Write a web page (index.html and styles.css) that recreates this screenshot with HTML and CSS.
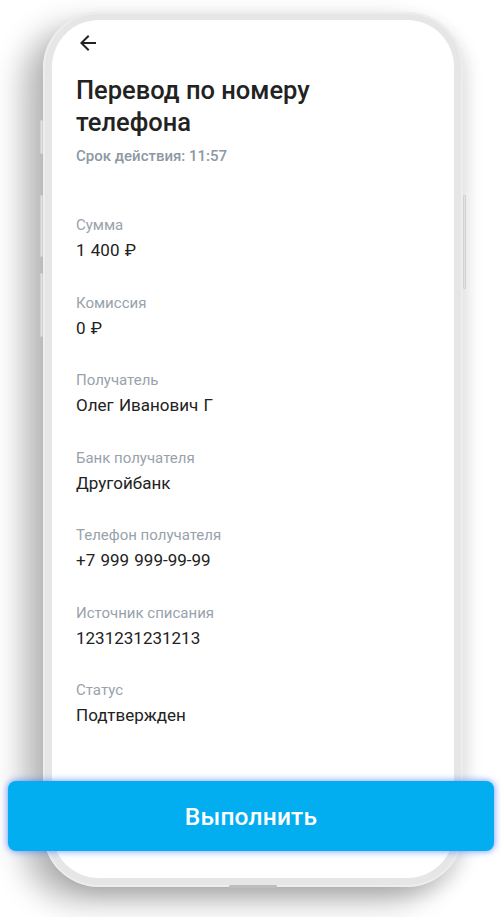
FILE: index.html
```html
<!DOCTYPE html>
<html lang="ru">
<head>
  <meta charset="UTF-8">
  <title>Перевод по номеру телефона</title>
  <link rel="stylesheet" href="styles.css">
</head>
<body>

  <div class="stage">
    <div class="phone">
      <span class="side-btn left b1"></span>
      <span class="side-btn left b2"></span>
      <span class="side-btn left b3"></span>
      <span class="side-btn right b4"></span>

      <div class="screen">
        <button class="back" aria-label="Назад">
          <svg width="24" height="24" viewBox="0 0 24 24">
            <path d="M20 11H7.83l5.59-5.59L12 4l-8 8 8 8 1.41-1.41L7.83 13H20v-2z" fill="#222"/>
          </svg>
        </button>

        <h1 class="title">Перевод по номеру телефона</h1>
        <p class="expires">Срок действия: 11:57</p>

        <div class="details">
          <div class="row">
            <span class="label">Сумма</span>
            <span class="value">1 400 ₽</span>
          </div>
          <div class="row">
            <span class="label">Комиссия</span>
            <span class="value">0 ₽</span>
          </div>
          <div class="row">
            <span class="label">Получатель</span>
            <span class="value">Олег Иванович Г</span>
          </div>
          <div class="row">
            <span class="label">Банк получателя</span>
            <span class="value">Другойбанк</span>
          </div>
          <div class="row">
            <span class="label">Телефон получателя</span>
            <span class="value">+7 999 999-99-99</span>
          </div>
          <div class="row">
            <span class="label">Источник списания</span>
            <span class="value">1231231231213</span>
          </div>
          <div class="row">
            <span class="label">Статус</span>
            <span class="value">Подтвержден</span>
          </div>
        </div>
      </div>

      <span class="home"></span>
    </div>

    <button class="submit">Выполнить</button>
  </div>

</body>
</html>
```

FILE: styles.css
```css
* {
  box-sizing: border-box;
}

body {
  margin: 0;
  width: 502px;
  height: 917px;
  overflow: hidden;
  background: #fff;
  font-family: Roboto, "Noto Sans", Arial, sans-serif;
  color: #222;
}

.stage {
  position: relative;
  height: 917px;
  padding: 12px 0 0 43px;
}

.phone {
  position: relative;
  width: 420px;
  height: 875px;
  padding: 8px 9px 9px 9px;
  border-radius: 56px;
  background: #e6e6e6;
  box-shadow:
    inset 0 0 0 2px #ededed,
    -20px 14px 30px rgba(0, 0, 0, 0.28),
    6px 8px 16px rgba(0, 0, 0, 0.1);
}

.side-btn {
  position: absolute;
  width: 3px;
  background: #e2e2e2;
  border: 1px solid #d2d2d2;
  border-radius: 1px;
}

.side-btn.left {
  left: -3px;
}

.side-btn.right {
  right: -3px;
}

.b1 { top: 108px; height: 34px; }
.b2 { top: 183px; height: 62px; }
.b3 { top: 261px; height: 64px; }
.b4 { top: 183px; height: 94px; }

.screen {
  height: 100%;
  padding: 11px 24px 0;
  border-radius: 47px;
  background: #fff;
  overflow: hidden;
}

.back {
  display: block;
  width: 24px;
  height: 24px;
  padding: 0;
  border: none;
  background: none;
}

.back svg {
  display: block;
}

.title {
  margin: 19px 0 0;
  width: 280px;
  font-size: 25.5px;
  line-height: 32px;
  font-weight: 500;
  color: #222;
}

.expires {
  margin: 8px 0 0;
  font-size: 15px;
  line-height: 20px;
  font-weight: 500;
  color: #8c99a4;
}

.details {
  margin-top: 49px;
  display: flex;
  flex-direction: column;
  gap: 30.5px;
}

.row {
  display: flex;
  flex-direction: column;
  gap: 3px;
}

.label {
  font-size: 15px;
  line-height: 20px;
  color: #98a2ab;
}

.value {
  font-size: 17px;
  line-height: 24px;
  color: #222;
  word-spacing: 1px;
}

.home {
  position: absolute;
  left: 186px;
  bottom: -1px;
  width: 48px;
  height: 3px;
  border-radius: 2px;
  background: #bdbdbd;
}

.submit {
  position: absolute;
  left: 8px;
  top: 781px;
  width: 486px;
  height: 70px;
  border: none;
  border-radius: 8px;
  background: #02aeef;
  box-shadow: 0 0 6px 1px rgba(40, 100, 255, 0.55);
  color: #fff;
  font-family: Roboto, "Noto Sans", Arial, sans-serif;
  font-size: 24.5px;
  font-weight: 500;
  letter-spacing: 0.2px;
  cursor: pointer;
}
```
